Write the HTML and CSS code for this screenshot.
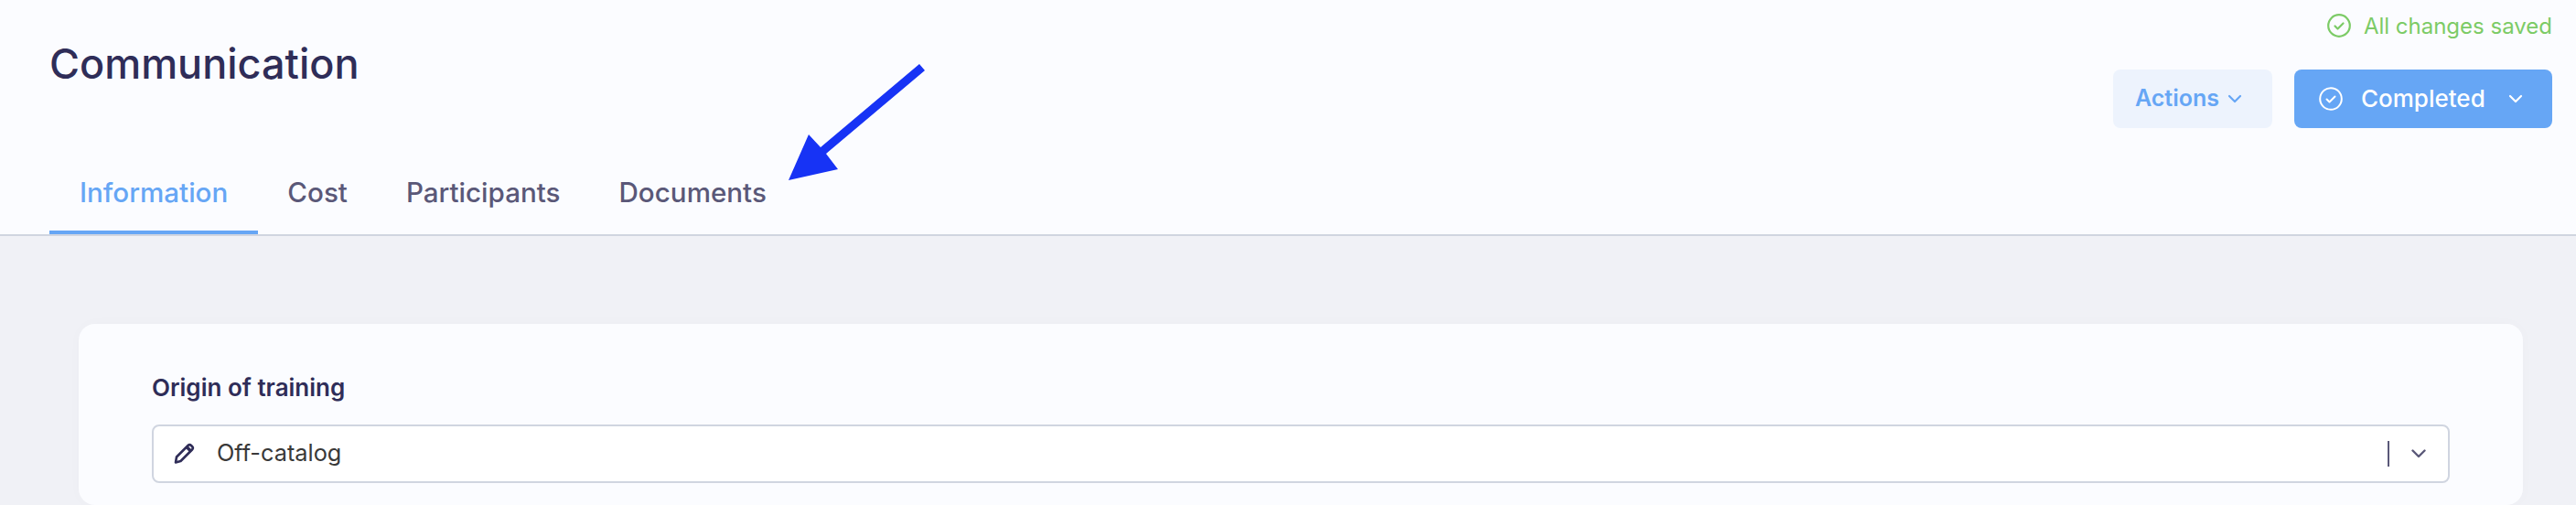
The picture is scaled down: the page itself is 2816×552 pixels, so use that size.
FILE: index.html
```html
<!DOCTYPE html>
<html lang="en">
<head>
<meta charset="utf-8">
<title>Communication</title>
<link rel="stylesheet" href="styles.css">
</head>
<body>
<header class="header">
  <div class="top">
    <h1 class="title">Communication</h1>
    <div class="side">
      <div class="saved">
        <svg class="saved-icon" viewBox="0 0 26 26"><circle cx="13" cy="13" r="11.8" fill="none" stroke="currentColor" stroke-width="2.2"/><path d="M8.5 13.5l3 3 6-6" fill="none" stroke="currentColor" stroke-width="2.2" stroke-linecap="round" stroke-linejoin="round"/></svg>
        <span>All changes saved</span>
      </div>
      <div class="buttons">
        <button class="btn btn-light">Actions
          <svg class="chev-small" viewBox="0 0 16 10"><path d="M2 2l6 6 6-6" fill="none" stroke="currentColor" stroke-width="2.2" stroke-linecap="round" stroke-linejoin="round"/></svg>
        </button>
        <button class="btn btn-primary">
          <svg class="btn-icon" viewBox="0 0 26 26"><circle cx="13" cy="13" r="11.8" fill="none" stroke="currentColor" stroke-width="2"/><path d="M8.5 13.5l3 3 6-6" fill="none" stroke="currentColor" stroke-width="2" stroke-linecap="round" stroke-linejoin="round"/></svg>
          <span class="btn-label">Completed</span>
          <svg class="chev-primary" viewBox="0 0 16 10"><path d="M2 2l6 6 6-6" fill="none" stroke="currentColor" stroke-width="2.2" stroke-linecap="round" stroke-linejoin="round"/></svg>
        </button>
      </div>
    </div>
  </div>
  <nav class="tabs">
    <a class="tab tab-active">Information</a>
    <a class="tab">Cost</a>
    <a class="tab">Participants</a>
    <a class="tab">Documents</a>
  </nav>
  <svg class="arrow" viewBox="0 0 149 127"><polygon points="143,0 149,7 41,98 54,115 0,127 22,77 35,91" fill="#1733f5"/></svg>
</header>
<main class="content">
  <section class="card">
    <label class="field-label">Origin of training</label>
    <div class="select">
      <svg class="pencil" viewBox="0 0 24 24"><path d="M3 21.500l1-6L16.500 3a2.500 2.500 0 0 1 3.500 0l1 1a2.500 2.500 0 0 1 0 3.500L8.500 20z" fill="none" stroke="#2f2d58" stroke-width="2.600" stroke-linejoin="round"/><path d="M15 4.500l5 5" stroke="#2f2d58" stroke-width="3.500"/></svg>
      <span class="select-value">Off-catalog</span>
      <span class="select-sep"></span>
      <svg class="select-chev" viewBox="0 0 16 10"><path d="M1.500 1.500L8 8l6.500-6.500" fill="none" stroke="currentColor" stroke-width="2.400" stroke-linecap="round" stroke-linejoin="round"/></svg>
    </div>
  </section>
</main>
</body>
</html>
```
FILE: styles.css
```css
* { box-sizing: border-box; }
html, body { margin: 0; height: 552px; overflow: hidden; }
body {
  background: #f0f1f6;
  font-family: "Inter", "Liberation Sans", sans-serif;
  color: #2f2d58;
}
.header {
  position: relative;
  height: 258px;
  background: #fbfcff;
  border-bottom: 2px solid #d0d5e0;
  padding: 0 26px 0 54px;
  display: flex;
  flex-direction: column;
}
.top { display: flex; justify-content: space-between; height: 182px; }
.title { margin: 40px 0 0; font-size: 45px; line-height: 60px; font-weight: 500; }
.side { display: flex; flex-direction: column; align-items: flex-end; padding-top: 13px; }
.saved { display: flex; align-items: center; height: 30px; color: #7ccb66; font-size: 24px; gap: 14px; }
.saved-icon { width: 26px; height: 26px; }
.buttons { display: flex; gap: 24px; margin-top: 33px; }
.btn {
  height: 64px; border: 0; border-radius: 8px; font-family: inherit; font-size: 25px; font-weight: 600;
  display: flex; align-items: center; padding: 0 0 2px;
}
.btn-light { width: 174px; background: #edf3fd; color: #66a6f5; padding-left: 24px; gap: 9px; }
.chev-small { width: 16px; height: 10px; margin-top: 2px; }
.btn-primary { width: 282px; background: #66a6f5; color: #fff; padding-left: 27px; font-size: 26px; font-weight: 500; }
.btn-icon { width: 26px; height: 26px; margin-top: 2px; }
.btn-label { margin-left: 20px; }
.chev-primary { width: 16px; height: 10px; margin: 2px 0 0 25px; }
.tabs { display: flex; height: 74px; }
.tab {
  padding: 0 32px 18px; font-size: 29.6px; font-weight: 500; color: #5a5878;
  display: flex; align-items: center; height: 74px;
}
.tab-active { padding: 0 33px 14px; color: #66a6f5; border-bottom: 4px solid #66a6f5; }
.arrow { position: absolute; left: 862px; top: 70px; width: 149px; height: 127px; }
.content { padding: 96px 58px 0 86px; }
.card { background: #fbfcff; border-radius: 18px; height: 198px; padding: 54px 80px 0; box-shadow: 0 0 16px rgba(47, 45, 88, 0.02); }
.field-label { display: block; font-size: 26px; line-height: 32px; padding-bottom: 2px; font-weight: 600; }
.select {
  margin-top: 22px; height: 64px; background: #fff; border: 2px solid #d0d5e0; border-radius: 8px;
  display: flex; align-items: center; padding: 0 24px 0 21px;
}
.pencil { width: 24px; height: 24px; }
.select-value { margin-left: 24px; font-size: 25.3px; color: #393939; flex: 1; padding-bottom: 3px; }
.select-sep { width: 2px; height: 28px; background: #5a5878; }
.select-chev { width: 16px; height: 10px; margin-left: 24px; color: #5a5878; }
```
